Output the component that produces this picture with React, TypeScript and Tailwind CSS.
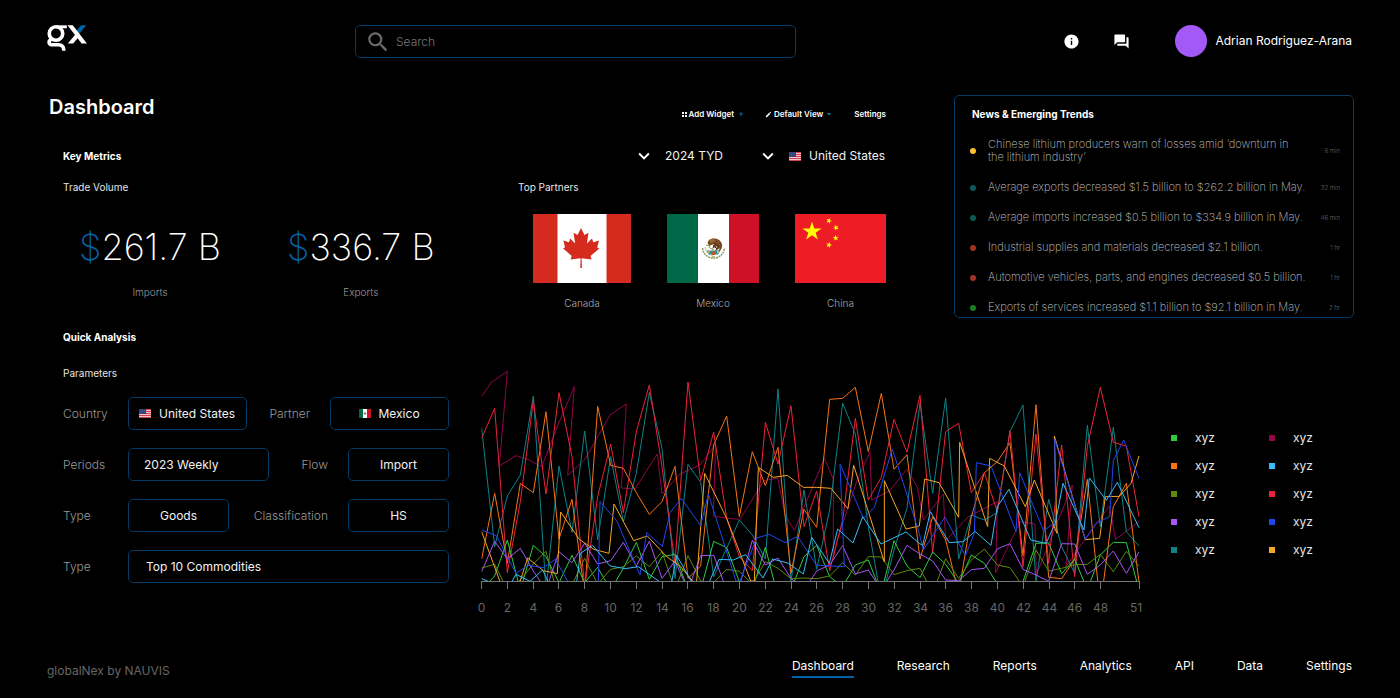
import React from "react";
import { MdInfo, MdForum, MdSearch, MdKeyboardArrowDown, MdEdit, MdAdd, MdArrowDropDown } from "react-icons/md";

const CHART_STEP = 38.67;

const weekly = (values: number[]) =>
  values.map((y, i) => `${Math.round(35 + i * CHART_STEP)},${y}`).join(" ");

const series: { name: string; color: string; points: string }[] = [
  {
    name: "magenta",
    color: "#93064a",
    points:
      "35,110 63,68 112,34 88,318 138,287 178,300 215,320 265,192 313,80 293,346 345,298 420,165 469,132 454,384 495,387 562,282 576,402 630,342 690,315 737,252 730,468 770,475 810,478 882,362 923,354 945,465 973,512 1063,295 1090,358 1090,590 1100,545 1160,365 1200,275 1205,420 1260,392 1310,328 1342,380 1360,480 1420,402 1427,542 1495,470 1582,425 1577,638 1650,485 1695,492 1699,645 1807,375 1788,620 1840,545 1918,438 1937,538 2007,485",
  },
  {
    name: "teal",
    color: "#0e8388",
    points: weekly([
      205, 560, 408, 345, 108, 690, 318, 517, 213, 540, 290, 485, 340, 97, 265, 655, 313, 367, 650, 565, 480, 525, 597,
      87, 665, 390, 628, 450, 130, 222, 500, 720, 570, 445, 128, 400, 114, 597, 465, 480, 458, 215, 135, 665, 418, 560,
      640, 196, 500, 202, 515, 558,
    ]),
  },
  {
    name: "orange",
    color: "#f97316",
    points: weekly([
      597, 400, 610, 370, 398, 155, 537, 418, 700, 139, 316, 325, 398, 463, 425, 319, 655, 618, 255, 168, 470, 275, 377,
      262, 640, 448, 502, 118, 115, 82, 275, 100, 328, 284, 597, 470, 540, 700, 470, 338, 305, 248, 588, 134, 652, 656,
      598, 358, 740, 440, 370, 665,
    ]),
  },
  {
    name: "red",
    color: "#ef233c",
    points: weekly([
      235, 145, 638, 425, 122, 402, 98, 290, 680, 410, 252, 458, 215, 75, 320, 610, 66, 362, 216, 475, 590, 632, 187,
      312, 137, 500, 393, 632, 480, 175, 420, 352, 178, 277, 106, 580, 215, 190, 398, 338, 455, 212, 620, 222, 610, 255,
      650, 260, 82, 247, 258, 470,
    ]),
  },
  {
    name: "green",
    color: "#2ecc40",
    points: weekly([
      690, 648, 540, 690, 556, 590, 668, 586, 668, 622, 690, 625, 547, 658, 590, 583, 690, 690, 544, 563, 665, 690, 562,
      710, 690, 590, 556, 650, 680, 615, 600, 700, 542, 618, 653, 576, 613, 670, 585, 610, 672, 720, 665, 550, 549, 641,
      597, 690, 585, 547, 548, 690,
    ]),
  },
  {
    name: "olive",
    color: "#5c8a0c",
    points: weekly([
      624, 613, 690, 660, 612, 574, 720, 675, 595, 672, 628, 620, 588, 620, 575, 690, 587, 663, 668, 628, 634, 672, 605,
      625, 656, 654, 656, 648, 608, 645, 590, 591, 644, 632, 625, 700, 596, 655, 600, 567, 615, 623, 680, 570, 633, 625,
      614, 613, 583, 635, 574, 618,
    ]),
  },
  {
    name: "purple",
    color: "#a855f7",
    points: weekly([
      635, 544, 597, 565, 633, 690, 575, 608, 550, 612, 602, 547, 618, 544, 655, 603, 690, 587, 586, 690, 680, 541, 615,
      594, 655, 690, 633, 615, 557, 642, 630, 690, 630, 556, 582, 603, 660, 662, 629, 625, 567, 551, 628, 645, 664, 551,
      552, 643, 615, 573, 640, 576,
    ]),
  },
  {
    name: "amber",
    color: "#f5a524",
    points:
      "35,515 90,665 145,680 173,594 220,632 262,641 272,456 328,538 372,568 417,580 432,432 491,542 532,528 590,590 630,618 672,668 680,663 704,340 770,475 842,663 853,663 865,322 910,352 952,346 1000,382 1040,382 1083,385 1134,446 1151,316 1243,606 1243,362 1308,507 1348,498 1364,357 1407,368 1466,472 1469,247 1553,500 1559,295 1603,318 1666,440 1693,360 1761,520 1753,228 1846,539 1889,535 1906,410 1948,409 1983,370 2007,288",
  },
  {
    name: "blue",
    color: "#2146ef",
    points:
      "35,510 79,527 138,640 173,616 220,623 256,598 297,670 340,700 385,670 390,424 441,484 510,645 530,518 577,559 600,458 634,415 692,497 715,402 798,663 810,663 860,534 898,523 945,548 983,529 1039,615 1123,620 1110,312 1180,475 1213,442 1267,267 1348,520 1360,570 1425,471 1486,587 1513,520 1519,308 1563,318 1638,515 1649,338 1721,513 1757,485 1754,238 1846,538 1878,490 1919,470 1930,302 1961,240 2007,355",
  },
  {
    name: "sky",
    color: "#38bdf8",
    points:
      "35,656 60,666 125,666 138,643 180,664 218,630 235,666 320,666 331,580 368,556 420,618 466,626 505,620 570,666 605,666 620,586 665,666 718,666 747,598 790,600 827,584 879,654 908,597 955,610 1000,642 1025,532 1078,610 1103,507 1149,549 1178,470 1233,552 1308,516 1348,550 1358,556 1381,455 1438,548 1480,545 1515,514 1563,556 1582,440 1617,388 1682,540 1728,550 1756,490 1779,370 1842,510 1858,354 1909,421 1942,367 2007,503",
  },
];

const ticks = [...Array.from({ length: 25 }, (_, i) => i * 2), 51];

const news = [
  { color: "#fbc02d", text: ["Chinese lithium producers warn of losses amid ‘downturn in", "the lithium industry’"], time: "6 min" },
  { color: "#0b5a55", text: ["Average exports decreased $1.5 billion to $262.2 billion in May."], time: "32 min" },
  { color: "#0b5a55", text: ["Average imports increased $0.5 billion to $334.9 billion in May."], time: "46 min" },
  { color: "#a13324", text: ["Industrial supplies and materials decreased $2.1 billion."], time: "1 hr" },
  { color: "#a13324", text: ["Automotive vehicles, parts, and engines decreased $0.5 billion."], time: "1 hr" },
  { color: "#1b7f22", text: ["Exports of services increased $1.1 billion to $92.1 billion in May."], time: "2 hr" },
];

const legend = ["#2ecc40", "#93064a", "#f97316", "#38bdf8", "#5c8a0c", "#ef233c", "#a855f7", "#2146ef", "#0e8388", "#f5a524"];

const navItems = ["Dashboard", "Research", "Reports", "Analytics", "API", "Data", "Settings"];

function Logo() {
  return (
    <svg viewBox="51 44 122 79" className="h-[26px] w-[41px]" fill="none" role="img" aria-label="gx">
      <circle cx="77" cy="70" r="20.5" stroke="#fff" strokeWidth="11" />
      <path d="M77 49.500H110" stroke="#fff" strokeWidth="9" />
      <path d="M64 86C52 94 54 104 68 104H84Q101 104 101 122" stroke="#fff" strokeWidth="11" />
      <path d="M169 45H153L138 63L147 71Z" fill="#0063a8" />
      <path d="M112 45H128L171 100H155Z" fill="#fff" />
      <path d="M113 100H129L148 78L139 69Z" fill="#fff" />
    </svg>
  );
}

function UsFlag() {
  return (
    <svg viewBox="0 0 24 18" className="h-[9px] w-3 shrink-0" aria-hidden="true">
      <rect width="24" height="18" fill="#f0c4c8" />
      {[0, 4, 8, 12, 16].map((y) => (
        <rect key={y} y={y} width="24" height="2" fill="#d0404f" />
      ))}
      <rect width="14" height="10" fill="#2f3f73" />
      {[2, 5, 8].map((y) =>
        [2, 5, 8, 11].map((x) => <circle key={`${x}-${y}`} cx={x} cy={y} r="0.7" fill="#8d9ac0" />),
      )}
    </svg>
  );
}

function MexicoFlagSmall() {
  return (
    <svg viewBox="0 0 12 9" className="h-[9px] w-3 shrink-0" aria-hidden="true">
      <rect width="12" height="9" fill="#fff" />
      <rect width="4" height="9" fill="#006847" />
      <rect x="8" width="4" height="9" fill="#ce1126" />
      <circle cx="6" cy="4.500" r="1.300" fill="#9a7653" />
    </svg>
  );
}

function CanadaFlag() {
  return (
    <svg viewBox="0 0 98 69" className="h-[69px] w-[98px]" role="img" aria-label="Flag of Canada">
      <rect width="98" height="69" fill="#d52b1e" />
      <rect x="24.500" width="49" height="69" fill="#fff" />
      <path
        fill="#d52b1e"
        d="M48 14L51.500 21L55.500 18.700L53.900 29.500L59 24.600L60.300 28.200L66 26.600L64.200 33.200L66.300 34.500L57.500 42L58.700 45.500L48.600 44.200L48.900 54H47.300L47.600 44.200L37.500 45.500L38.700 42L30.200 34.500L32 33.200L30.300 26.600L36 28.200L37.200 24.600L42.200 29.500L40.500 18.700L44.600 21Z"
      />
    </svg>
  );
}

function MexicoFlag() {
  return (
    <svg viewBox="0 0 92 69" className="h-[69px] w-[92px]" role="img" aria-label="Flag of Mexico">
      <rect width="92" height="69" fill="#fff" />
      <rect width="31" height="69" fill="#006847" />
      <rect x="62" width="30" height="69" fill="#ce1126" />
      <path d="M35.500 34C36 40 41 44.200 46.500 44.200S57 40 57.600 34" fill="none" stroke="#8d9868" strokeWidth="1.500" strokeDasharray="2 0.700" />
      <path d="M38 33C39 38 42 41 46 42" fill="none" stroke="#c9c08a" strokeWidth="1" />
      <path d="M42 26C45 23.500 53 23.500 55 30C55.500 34 54 37 51 37.500L53 34L48 37.500L50 32L45 35L47 30L42 32L40.500 28.500Z" fill="#7a4a22" />
      <path d="M42 26L46 24.500L48 27L44 29Z" fill="#9b6a35" />
      <path d="M47 29L52 33M46 31L50 35" stroke="#3d2614" strokeWidth="1" />
      <path d="M39 31L43 32L42 34M43 34L47 36" fill="none" stroke="#8e9a54" strokeWidth="1" />
      <path d="M39.500 36.500H53.500L51 40.500H42Z" fill="#2e8f94" />
      <path d="M44 37.500H49L48 41H45Z" fill="#b45a35" />
      <circle cx="42" cy="38" r="1" fill="#e3b23c" />
      <circle cx="51" cy="38" r="1" fill="#d9cfa0" />
      <path d="M45 42H48V44.500H45Z" fill="#c7b984" />
    </svg>
  );
}

const STAR = "M0 -10L2.245 -3.090H9.511L3.633 1.180L5.878 8.090L0 3.820L-5.878 8.090L-3.633 1.180L-9.511 -3.090H-2.245Z";

function ChinaFlag() {
  return (
    <svg viewBox="0 0 91 69" className="h-[69px] w-[91px]" role="img" aria-label="Flag of China">
      <rect width="91" height="69" fill="#ee1c25" />
      <g fill="#ff0">
        <path d={STAR} transform="translate(17 17.500)" />
        <path d={STAR} transform="translate(34 6.800) rotate(24) scale(.32)" />
        <path d={STAR} transform="translate(41 13.700) rotate(46) scale(.32)" />
        <path d={STAR} transform="translate(40.700 24) rotate(-8) scale(.32)" />
        <path d={STAR} transform="translate(34 31) rotate(20) scale(.32)" />
      </g>
    </svg>
  );
}

function Metric({ value, label }: { value: string; label: string }) {
  return (
    <div className="flex flex-col items-center">
      <p className="text-[36px] leading-[44px] font-extralight">
        <span className="text-[#0063a8]">$</span>
        {value}
      </p>
      <p className="mt-4 text-[10px] leading-[14px] font-light text-[#999]">{label}</p>
    </div>
  );
}

function Partner({ name, children }: { name: string; children: React.ReactNode }) {
  return (
    <figure className="flex flex-col items-center">
      {children}
      <figcaption className="mt-[13px] text-[10px] leading-[14px] font-light text-[#aaa]">{name}</figcaption>
    </figure>
  );
}

const box = "flex h-[33px] items-center justify-center gap-2 rounded-[5px] border border-[#003a66]";
const selectBase = "h-full appearance-none bg-transparent text-xs text-[#f2f2f2] outline-none";
const labelBase = "text-xs font-light text-[#999]";

function Chart() {
  return (
    <svg viewBox="0 0 690 260" className="w-full" role="img" aria-label="Weekly imports by commodity">
      <defs>
        <clipPath id="plot">
          <rect x="34" y="0" width="1976" height="663" />
        </clipPath>
      </defs>
      <g transform="scale(0.33333)">
        <g clipPath="url(#plot)" fill="none" strokeWidth="3" strokeLinejoin="bevel">
          {series.map((s) => (
            <polyline key={s.name} points={s.points} stroke={s.color} />
          ))}
        </g>
      </g>
      <path d="M11 221.500H670" stroke="#777" strokeWidth="1" />
      {ticks.map((t) => {
        const x = Math.round(11 + t * 12.9);
        return (
          <g key={t}>
            <path d={`M${x + 0.5} 221V229`} stroke="#777" strokeWidth="1" />
            <text x={t === 51 ? x - 3 : x + 0.5} y="252" textAnchor="middle" className="fill-[#666] text-xs">
              {t}
            </text>
          </g>
        );
      })}
    </svg>
  );
}

export default function App() {
  return (
    <div className="flex min-h-screen flex-col bg-black pr-[46px] pl-[47px] font-['Inter',sans-serif] text-xs text-white">
      <header className="flex items-start pt-[25px] pr-[2px]">
        <a href="#" className="mr-[267px]">
          <Logo />
        </a>
        <div className="flex h-[33px] max-w-[441px] flex-1 items-center gap-1 rounded-[5px] border border-[#003a66] pl-[9px]">
          <MdSearch className="size-[26px] shrink-0 text-[#6b6b6b]" aria-hidden="true" />
          <input
            type="search"
            aria-label="Search"
            placeholder="Search"
            className="w-full bg-transparent pl-[1px] text-xs font-light outline-none placeholder:text-[#777]"
          />
        </div>
        <div className="ml-auto flex h-8 items-center">
          <button aria-label="Information" className="mr-[33px]">
            <MdInfo className="size-[17px]" />
          </button>
          <button aria-label="Messages" className="mr-[45px]">
            <MdForum className="size-[17px]" />
          </button>
          <button className="flex items-center gap-2">
            <span className="size-8 rounded-full bg-[#a259f7]" />
            <span>Adrian Rodriguez-Arana</span>
          </button>
        </div>
      </header>

      <main>
        <div className="mt-[37px] flex justify-between">
          <section className="w-[839px]">
            <div className="flex items-start justify-between pl-[2px]">
              <h1 className="text-xl leading-6 font-semibold">Dashboard</h1>
              <div className="mt-[14px] flex text-[8px] leading-[10px] font-semibold">
                <button className="mr-5 flex items-center">
                  <svg viewBox="0 0 5 5" className="mr-[2px] size-[5px]" fill="#fff" aria-hidden="true">
                    <path d="M0 0h2v2H0zM3 0h2v2H3zM0 3h2v2H0zM3 3h2v2H3z" />
                  </svg>
                  Add Widget
                  <MdAdd className="ml-[3px] size-[8px] text-[#1a8fdc]" aria-hidden="true" />
                </button>
                <button className="mr-5 flex items-center">
                  <MdEdit className="mr-[2px] size-[7px]" aria-hidden="true" />
                  Default View
                  <MdArrowDropDown className="ml-[1px] size-[10px] text-[#1a8fdc]" aria-hidden="true" />
                </button>
                <button>Settings</button>
              </div>
            </div>

            <div className="mt-[26px] flex items-center justify-between pl-4">
              <h2 className="text-[10px] leading-[14px] font-bold">Key Metrics</h2>
              <div className="flex items-center">
                <div className="mr-[34px] flex items-center gap-[10px]">
                  <MdKeyboardArrowDown className="size-[22px]" aria-hidden="true" />
                  <select aria-label="Period" className="appearance-none bg-transparent leading-[18px] text-[#f2f2f2]">
                    <option>2024 TYD</option>
                  </select>
                </div>
                <div className="flex items-center gap-2">
                  <MdKeyboardArrowDown className="mr-[2px] size-[22px]" aria-hidden="true" />
                  <UsFlag />
                  <select aria-label="Reporting country" className="appearance-none bg-transparent leading-[18px] text-[#f2f2f2]">
                    <option>United States</option>
                  </select>
                </div>
              </div>
            </div>

            <div className="mt-[13px] flex justify-between pl-4">
              <div>
                <h3 className="text-[10px] leading-[14px] text-[#e6e6e6]">Trade Volume</h3>
                <div className="mt-[31px] flex gap-[66px] pl-4">
                  <Metric value="261.7 B" label="Imports" />
                  <Metric value="336.7 B" label="Exports" />
                </div>
              </div>
              <div>
                <h3 className="text-[10px] leading-[14px] text-[#e6e6e6]">Top Partners</h3>
                <div className="mt-5 flex gap-9 pl-[15px]">
                  <Partner name="Canada">
                    <CanadaFlag />
                  </Partner>
                  <Partner name="Mexico">
                    <MexicoFlag />
                  </Partner>
                  <Partner name="China">
                    <ChinaFlag />
                  </Partner>
                </div>
              </div>
            </div>
          </section>

          <section className="h-[223px] w-[400px] overflow-hidden rounded-[5px] border border-[#003a66] pt-[11px] pr-[13px] pl-[15px]">
            <h2 className="pl-[2px] text-[10px] leading-[14px] font-bold">News &amp; Emerging Trends</h2>
            <ul className="mt-[17px] flex flex-col gap-[17px]">
              {news.map((n) => (
                <li key={n.text[0]} className="flex items-center">
                  <span className="mr-3 size-[6px] shrink-0 rounded-full" style={{ backgroundColor: n.color }} />
                  <p className="flex-1 text-[11px] leading-[13px] font-extralight whitespace-nowrap text-[#c4c4c4]">
                    {n.text.map((line) => (
                      <span key={line} className="block">
                        {line}
                      </span>
                    ))}
                  </p>
                  <time className="text-[6px] leading-[8px] font-light text-[#666]">{n.time}</time>
                </li>
              ))}
            </ul>
          </section>
        </div>

        <div className="mt-3 flex items-start">
          <section className="w-[402px] shrink-0 pl-4">
            <h2 className="text-[10px] leading-[14px] font-bold">Quick Analysis</h2>
            <h3 className="mt-[22px] text-[10px] leading-[14px] text-[#e6e6e6]">Parameters</h3>
            <form className="mt-[17px] flex flex-col gap-[18px]">
              <div className="flex items-center">
                <label htmlFor="country" className={`w-[65px] ${labelBase}`}>Country</label>
                <div className={`w-[119px] ${box}`}>
                  <UsFlag />
                  <select id="country" className={selectBase}>
                    <option>United States</option>
                  </select>
                </div>
                <label htmlFor="partner" className={`mr-5 ml-auto ${labelBase}`}>Partner</label>
                <div className={`w-[119px] ${box}`}>
                  <MexicoFlagSmall />
                  <select id="partner" className={selectBase}>
                    <option>Mexico</option>
                  </select>
                </div>
              </div>
              <div className="flex items-center">
                <label htmlFor="periods" className={`w-[65px] ${labelBase}`}>Periods</label>
                <div className={`w-[141px] ${box}`}>
                  <select id="periods" className={`w-full pl-[15px] ${selectBase}`}>
                    <option>2023 Weekly</option>
                  </select>
                </div>
                <label htmlFor="flow" className={`mr-5 ml-auto ${labelBase}`}>Flow</label>
                <div className={`w-[101px] ${box}`}>
                  <select id="flow" className={`w-full text-center ${selectBase}`}>
                    <option>Import</option>
                  </select>
                </div>
              </div>
              <div className="flex items-center">
                <label htmlFor="kind" className={`w-[65px] ${labelBase}`}>Type</label>
                <div className={`w-[101px] ${box}`}>
                  <select id="kind" className={`w-full text-center ${selectBase}`}>
                    <option>Goods</option>
                  </select>
                </div>
                <label htmlFor="classification" className={`mr-5 ml-auto ${labelBase}`}>Classification</label>
                <div className={`w-[101px] ${box}`}>
                  <select id="classification" className={`w-full text-center ${selectBase}`}>
                    <option>HS</option>
                  </select>
                </div>
              </div>
              <div className="flex items-center">
                <label htmlFor="commodities" className={`w-[65px] ${labelBase}`}>Type</label>
                <div className={`flex-1 ${box}`}>
                  <select id="commodities" className={`w-full pl-[17px] ${selectBase}`}>
                    <option>Top 10 Commodities</option>
                  </select>
                </div>
              </div>
            </form>
          </section>

          <div className="mt-[30px] ml-[21px] min-w-0 flex-1">
            <Chart />
          </div>

          <ul className="mt-[100px] ml-[11px] grid w-[183px] shrink-0 grid-cols-[98px_1fr] gap-y-3">
            {legend.map((color) => (
              <li key={color} className="flex items-center gap-[18px] leading-4 text-[#e6e6e6]">
                <span className="size-[6px]" style={{ backgroundColor: color }} />
                xyz
              </li>
            ))}
          </ul>
        </div>
      </main>

      <footer className="mt-auto flex items-end justify-between pr-[2px] pb-5">
        <p className="leading-[14px] text-[#666]">globalNex by NAUVIS</p>
        <nav className="flex gap-[43px]">
          {navItems.map((item, i) => (
            <a
              key={item}
              href={`#${item.toLowerCase()}`}
              className={
                i === 0
                  ? "border-b-2 border-[#0063a8] pb-[2px] leading-4"
                  : "border-b-2 border-transparent pb-[2px] leading-4"
              }
            >
              {item}
            </a>
          ))}
        </nav>
      </footer>
    </div>
  );
}
